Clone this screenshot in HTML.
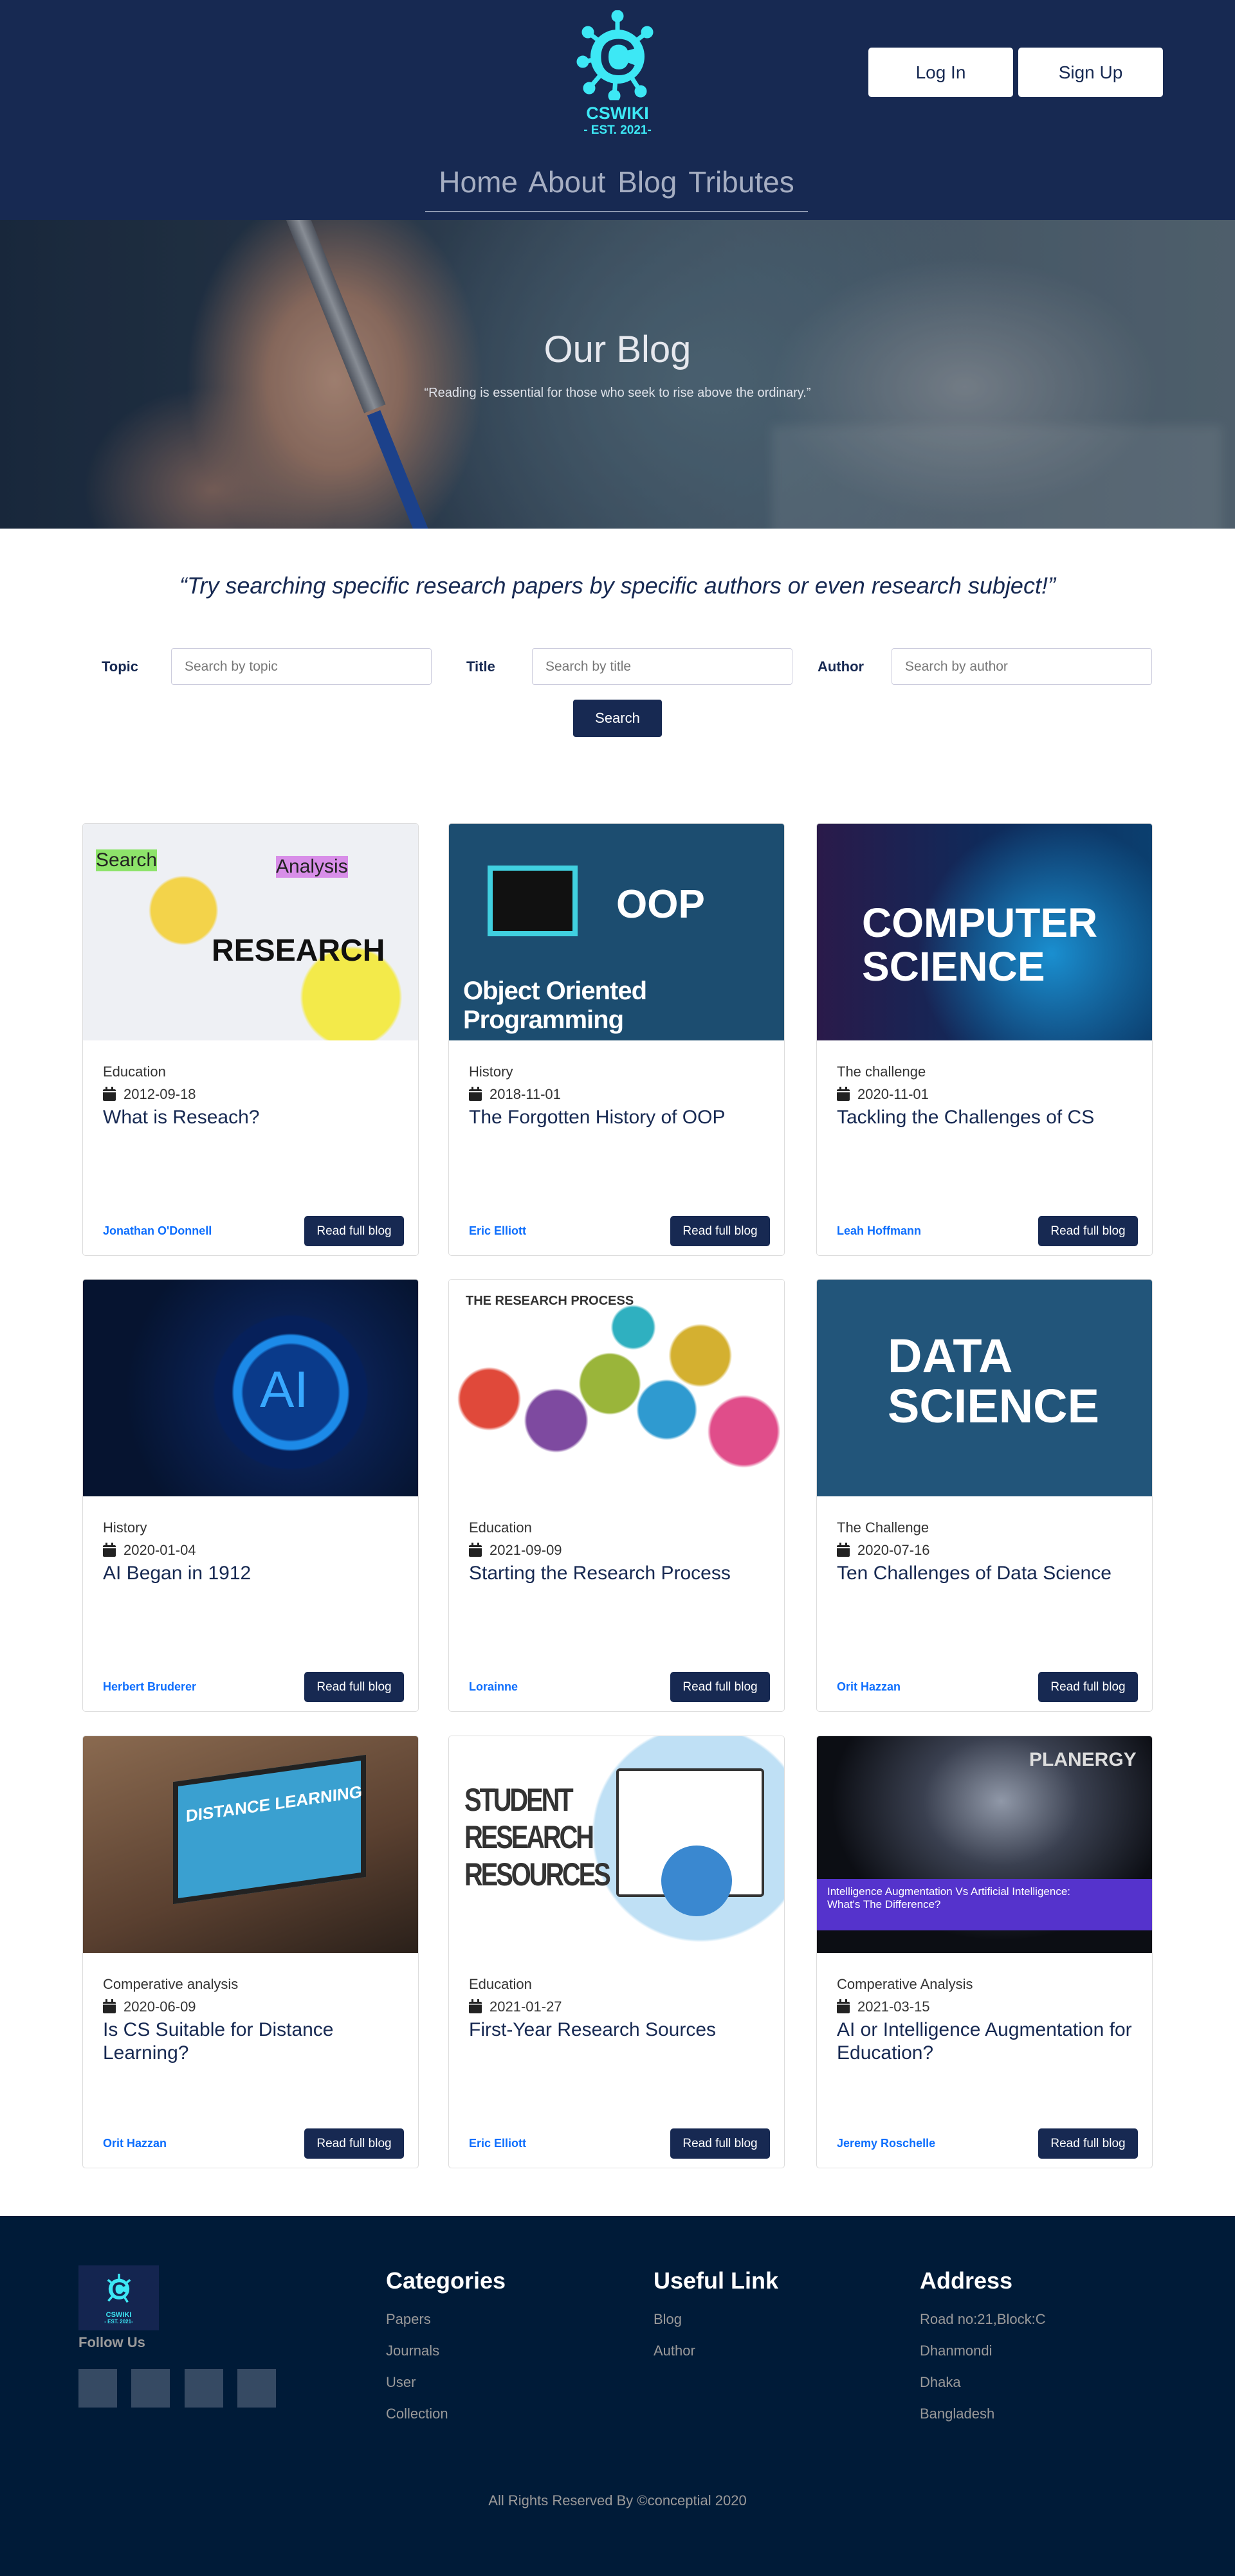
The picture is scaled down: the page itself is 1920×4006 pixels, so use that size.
<!DOCTYPE html>
<html><head><meta charset="utf-8">
<style>
*{box-sizing:border-box;margin:0;padding:0}
body{width:1920px;height:4006px;font-family:"Liberation Sans",sans-serif;background:#fff;position:relative;overflow:hidden}
.hdr{position:absolute;left:0;top:0;width:1920px;height:342px;background:#172952}
.logo{position:absolute;left:870px;top:10px;width:180px;height:210px;text-align:center}
.btn{position:absolute;top:74px;height:77px;width:225px;background:#fff;border-radius:5px;color:#172952;font-size:28px;text-align:center;line-height:77px}
.nav{position:absolute;left:661px;top:256px;width:595px;height:74px;border-bottom:2px solid #8c97b0;text-align:center;font-size:46px;color:#a6aec2;word-spacing:6px}
.hero{position:absolute;left:0;top:342px;width:1920px;height:480px;overflow:hidden;
background:
radial-gradient(ellipse 230px 300px at 520px 250px,#c0967e 0%,#a27a66 45%,rgba(80,70,75,0) 100%),
radial-gradient(ellipse 200px 160px at 330px 420px,#8a6a5e 0%,rgba(80,70,75,0) 100%),
radial-gradient(ellipse 300px 200px at 1500px 260px,#8a939a 0%,rgba(100,110,120,0) 100%),
radial-gradient(ellipse 500px 400px at 1100px 250px,#56707e 0%,rgba(60,80,95,0) 100%),
linear-gradient(90deg,#1a2a3e 0%,#263748 25%,#4b5e6e 60%,#5d6f7a 100%)}
.hero .ov{position:absolute;inset:0;background:rgba(20,30,50,.2)}
.hero h1{position:absolute;top:168px;width:100%;text-align:center;color:#e6e8ee;font-size:58px;font-weight:normal}
.hero p{position:absolute;top:258px;width:100%;text-align:center;color:#e0e3ea;font-size:20px}
.quote{position:absolute;top:890px;width:100%;text-align:center;color:#172952;font-size:36px;font-style:italic}
.lbl{position:absolute;top:1024px;font-size:22px;font-weight:bold;color:#172952}
.inp{position:absolute;top:1008px;height:57px;width:405px;border:1px solid #ccd;border-radius:4px;font-size:21px;color:#777;padding-left:20px;line-height:55px}
.sbtn{position:absolute;left:891px;top:1088px;width:138px;height:58px;background:#172952;border-radius:4px;color:#fff;font-size:22px;text-align:center;line-height:58px}
.card{position:absolute;width:523px;height:673px;border:1px solid #ddd;border-radius:5px;overflow:hidden;display:flex;flex-direction:column}
.img{height:337px;position:relative;overflow:hidden;flex:none}
.body{flex:1;padding:32px 22px 14px 31px;display:flex;flex-direction:column}
.cat{font-size:22px;color:#333;line-height:34px}
.date{font-size:22px;color:#333;line-height:36px}
.date svg{vertical-align:-3px;margin-right:12px}
.ttl{font-size:30px;font-weight:500;color:#172952;line-height:36px}
.ft{margin-top:auto;display:flex;justify-content:space-between;align-items:center}
.au{color:#0d6efd;font-weight:bold;font-size:18px}
.rb{background:#172952;color:#fff;font-size:19px;border-radius:5px;width:155px;height:47px;line-height:47px;text-align:center}
.foot{position:absolute;left:0;top:3446px;width:1920px;height:560px;background:#001b38}
.fh{position:absolute;top:80px;color:#fff;font-size:36px;font-weight:bold}
.fl{position:absolute;color:#9a9a9a;font-size:22px;line-height:49px}
.sq{position:absolute;top:238px;width:60px;height:60px;background:#364a63}
</style></head><body>
<div class="hdr">
 <div class="logo">
  <svg width="130" height="140" viewBox="0 0 130 140" style="margin-top:6px">
   <g stroke="#3de8f5" stroke-width="7" stroke-linecap="round" fill="#3de8f5">
    <line x1="65" y1="70" x2="65" y2="10"/><line x1="65" y1="70" x2="20" y2="35"/><line x1="65" y1="70" x2="110" y2="35"/>
    <line x1="65" y1="70" x2="12" y2="80"/><line x1="65" y1="70" x2="22" y2="120"/><line x1="65" y1="70" x2="60" y2="132"/>
    <line x1="65" y1="70" x2="100" y2="125"/>
    <circle cx="65" cy="9" r="6"/><circle cx="19" cy="34" r="6"/><circle cx="111" cy="34" r="6"/><circle cx="11" cy="80" r="6"/><circle cx="21" cy="121" r="6"/><circle cx="60" cy="133" r="6"/><circle cx="101" cy="126" r="6"/>
   </g>
   <circle cx="65" cy="72" r="42" fill="#3de8f5"/>
   <text x="65" y="100" text-anchor="middle" font-family="Liberation Sans" font-weight="bold" font-size="80" fill="#172952">C</text>
  </svg>
  <div style="color:#3de8f5;font-weight:bold;font-size:27px;margin-top:0">CSWIKI</div>
  <div style="color:#3de8f5;font-weight:bold;font-size:19px">- EST. 2021-</div>
 </div>
 <div class="btn" style="left:1350px">Log In</div>
 <div class="btn" style="left:1583px">Sign Up</div>
 <div class="nav">Home About Blog Tributes</div>
</div>
<div class="hero">
 <div style="position:absolute;left:430px;top:-40px;width:36px;height:360px;background:linear-gradient(90deg,#5c6068,#a5a9ae,#5c6068);transform:rotate(-22deg);transform-origin:top"></div>
 <div style="position:absolute;left:570px;top:300px;width:22px;height:240px;background:#1f4aa0;transform:rotate(-22deg);transform-origin:top"></div>
 <div style="position:absolute;left:1200px;top:320px;width:700px;height:200px;background:rgba(200,205,210,.15);filter:blur(8px)"></div>
 <div class="ov"></div>
 <h1>Our Blog</h1><p>“Reading is essential for those who seek to rise above the ordinary.”</p></div>
<div class="quote">“Try searching specific research papers by specific authors or even research subject!”</div>
<div class="lbl" style="left:158px">Topic</div><div class="inp" style="left:266px">Search by topic</div>
<div class="lbl" style="left:725px">Title</div><div class="inp" style="left:827px">Search by title</div>
<div class="lbl" style="left:1271px">Author</div><div class="inp" style="left:1386px">Search by author</div>
<div class="sbtn">Search</div>

<div class="card" style="left:128px;top:1280px"><div class="img" style="background:radial-gradient(circle at 30% 40%,#f3d34a 0 12%,transparent 13%),radial-gradient(circle at 80% 80%,#f3ea4a 0 15%,transparent 16%),#eef0f4"><div style="position:absolute;left:200px;top:170px;font-size:48px;font-weight:bold;color:#111">RESEARCH</div><div style="position:absolute;left:20px;top:40px;font-size:30px;color:#222;background:#8de36a">Search</div><div style="position:absolute;left:300px;top:50px;font-size:30px;color:#222;background:#d88ee8">Analysis</div></div>
<div class="body"><div class="cat">Education</div><div class="date"><svg width="20" height="22" viewBox="0 0 20 22"><rect x="0" y="4" width="20" height="18" rx="2" fill="#222"/><rect x="4" y="0" width="3" height="6" fill="#222"/><rect x="13" y="0" width="3" height="6" fill="#222"/><rect x="0" y="7" width="20" height="1.5" fill="#fff"/></svg>2012-09-18</div><div class="ttl">What is Reseach?</div>
<div class="ft"><span class="au">Jonathan O'Donnell</span><span class="rb">Read full blog</span></div></div></div>

<div class="card" style="left:697px;top:1280px"><div class="img" style="background:#1c4d70"><div style="position:absolute;left:60px;top:65px;width:140px;height:110px;border:8px solid #40d0e0;background:#111"></div><div style="position:absolute;left:260px;top:90px;font-size:62px;color:#fff;font-weight:bold">OOP</div><div style="position:absolute;left:22px;top:238px;font-size:40px;color:#fff;font-weight:bold;letter-spacing:-1px">Object Oriented Programming</div></div>
<div class="body"><div class="cat">History</div><div class="date"><svg width="20" height="22" viewBox="0 0 20 22"><rect x="0" y="4" width="20" height="18" rx="2" fill="#222"/><rect x="4" y="0" width="3" height="6" fill="#222"/><rect x="13" y="0" width="3" height="6" fill="#222"/><rect x="0" y="7" width="20" height="1.5" fill="#fff"/></svg>2018-11-01</div><div class="ttl">The Forgotten History of OOP</div>
<div class="ft"><span class="au">Eric Elliott</span><span class="rb">Read full blog</span></div></div></div>

<div class="card" style="left:1269px;top:1280px"><div class="img" style="background:radial-gradient(circle at 70% 60%,#1a8fd0 0,transparent 50%),linear-gradient(90deg,#2a1a4a,#0f2a5a 50%,#0b3f6f)"><div style="position:absolute;left:70px;top:120px;font-size:64px;color:#fff;font-weight:bold;line-height:68px">COMPUTER<br>SCIENCE</div></div>
<div class="body"><div class="cat">The challenge</div><div class="date"><svg width="20" height="22" viewBox="0 0 20 22"><rect x="0" y="4" width="20" height="18" rx="2" fill="#222"/><rect x="4" y="0" width="3" height="6" fill="#222"/><rect x="13" y="0" width="3" height="6" fill="#222"/><rect x="0" y="7" width="20" height="1.5" fill="#fff"/></svg>2020-11-01</div><div class="ttl">Tackling the Challenges of CS</div>
<div class="ft"><span class="au">Leah Hoffmann</span><span class="rb">Read full blog</span></div></div></div>

<div class="card" style="left:128px;top:1989px"><div class="img" style="background:radial-gradient(circle at 62% 52%,#0a3a8a 0 20%,#1c8ae8 21% 24%,#06205a 25% 32%,#0a2050 33%,#061430 70%)"><div style="position:absolute;left:275px;top:125px;font-size:80px;color:#38a8ff">AI</div></div>
<div class="body"><div class="cat">History</div><div class="date"><svg width="20" height="22" viewBox="0 0 20 22"><rect x="0" y="4" width="20" height="18" rx="2" fill="#222"/><rect x="4" y="0" width="3" height="6" fill="#222"/><rect x="13" y="0" width="3" height="6" fill="#222"/><rect x="0" y="7" width="20" height="1.5" fill="#fff"/></svg>2020-01-04</div><div class="ttl">AI Began in 1912</div>
<div class="ft"><span class="au">Herbert Bruderer</span><span class="rb">Read full blog</span></div></div></div>

<div class="card" style="left:697px;top:1989px"><div class="img" style="background:radial-gradient(circle at 12% 55%,#e0493a 0 9%,transparent 10%),radial-gradient(circle at 32% 65%,#7e4aa0 0 11%,transparent 12%),radial-gradient(circle at 48% 48%,#9ab53a 0 14%,transparent 15%),radial-gradient(circle at 65% 60%,#2f9ad0 0 11%,transparent 12%),radial-gradient(circle at 75% 35%,#d4b030 0 10%,transparent 11%),radial-gradient(circle at 88% 70%,#e04d8a 0 10%,transparent 11%),radial-gradient(circle at 55% 22%,#2fb0c0 0 8%,transparent 9%),#fff"><div style="position:absolute;left:26px;top:22px;font-size:20px;font-weight:bold;color:#333">THE RESEARCH PROCESS</div></div>
<div class="body"><div class="cat">Education</div><div class="date"><svg width="20" height="22" viewBox="0 0 20 22"><rect x="0" y="4" width="20" height="18" rx="2" fill="#222"/><rect x="4" y="0" width="3" height="6" fill="#222"/><rect x="13" y="0" width="3" height="6" fill="#222"/><rect x="0" y="7" width="20" height="1.5" fill="#fff"/></svg>2021-09-09</div><div class="ttl">Starting the Research Process</div>
<div class="ft"><span class="au">Lorainne</span><span class="rb">Read full blog</span></div></div></div>

<div class="card" style="left:1269px;top:1989px"><div class="img" style="background:#22557a"><div style="position:absolute;left:110px;top:80px;font-size:74px;color:#fff;font-weight:bold;line-height:78px">DATA<br>SCIENCE</div></div>
<div class="body"><div class="cat">The Challenge</div><div class="date"><svg width="20" height="22" viewBox="0 0 20 22"><rect x="0" y="4" width="20" height="18" rx="2" fill="#222"/><rect x="4" y="0" width="3" height="6" fill="#222"/><rect x="13" y="0" width="3" height="6" fill="#222"/><rect x="0" y="7" width="20" height="1.5" fill="#fff"/></svg>2020-07-16</div><div class="ttl">Ten Challenges of Data Science</div>
<div class="ft"><span class="au">Orit Hazzan</span><span class="rb">Read full blog</span></div></div></div>

<div class="card" style="left:128px;top:2699px"><div class="img" style="background:linear-gradient(160deg,#8a6a50,#5a4030 60%,#2a201a)"><div style="position:absolute;left:140px;top:50px;width:300px;height:190px;background:#3aa0d0;transform:skewY(-8deg);border:8px solid #222"></div><div style="position:absolute;left:160px;top:90px;font-size:26px;color:#fff;font-weight:bold;transform:skewY(-8deg)">DISTANCE LEARNING</div></div>
<div class="body"><div class="cat">Comperative analysis</div><div class="date"><svg width="20" height="22" viewBox="0 0 20 22"><rect x="0" y="4" width="20" height="18" rx="2" fill="#222"/><rect x="4" y="0" width="3" height="6" fill="#222"/><rect x="13" y="0" width="3" height="6" fill="#222"/><rect x="0" y="7" width="20" height="1.5" fill="#fff"/></svg>2020-06-09</div><div class="ttl">Is CS Suitable for Distance Learning?</div>
<div class="ft"><span class="au">Orit Hazzan</span><span class="rb">Read full blog</span></div></div></div>

<div class="card" style="left:697px;top:2699px"><div class="img" style="background:radial-gradient(circle at 75% 45%,#bfe0f5 0 38%,transparent 39%),#fff"><div style="position:absolute;left:260px;top:50px;width:230px;height:200px;border:4px solid #333;background:#fff;border-radius:6px"></div><div style="position:absolute;left:330px;top:170px;width:110px;height:110px;border-radius:50%;background:#3a88d0"></div><div style="position:absolute;left:24px;top:70px;font-size:50px;color:#333;font-weight:bold;line-height:58px;letter-spacing:-4px;transform:scaleX(.8);transform-origin:left">STUDENT<br>RESEARCH<br>RESOURCES</div></div>
<div class="body"><div class="cat">Education</div><div class="date"><svg width="20" height="22" viewBox="0 0 20 22"><rect x="0" y="4" width="20" height="18" rx="2" fill="#222"/><rect x="4" y="0" width="3" height="6" fill="#222"/><rect x="13" y="0" width="3" height="6" fill="#222"/><rect x="0" y="7" width="20" height="1.5" fill="#fff"/></svg>2021-01-27</div><div class="ttl">First-Year Research Sources</div>
<div class="ft"><span class="au">Eric Elliott</span><span class="rb">Read full blog</span></div></div></div>

<div class="card" style="left:1269px;top:2699px"><div class="img" style="background:radial-gradient(ellipse at 55% 30%,#9098a8 0,#3a4050 30%,#0c0e14 65%)"><div style="position:absolute;left:330px;top:20px;font-size:30px;color:#ddd;font-weight:bold">PLANERGY</div><div style="position:absolute;left:0;top:222px;width:523px;height:80px;background:#5533cc;color:#fff;font-size:17px;padding:10px 16px">Intelligence Augmentation Vs Artificial Intelligence:<br>What's The Difference?</div></div>
<div class="body"><div class="cat">Comperative Analysis</div><div class="date"><svg width="20" height="22" viewBox="0 0 20 22"><rect x="0" y="4" width="20" height="18" rx="2" fill="#222"/><rect x="4" y="0" width="3" height="6" fill="#222"/><rect x="13" y="0" width="3" height="6" fill="#222"/><rect x="0" y="7" width="20" height="1.5" fill="#fff"/></svg>2021-03-15</div><div class="ttl">AI or Intelligence Augmentation for Education?</div>
<div class="ft"><span class="au">Jeremy Roschelle</span><span class="rb">Read full blog</span></div></div></div>

<div class="foot">
 <div style="position:absolute;left:122px;top:77px;width:125px;height:101px;background:#142550;text-align:center;color:#3de8f5;font-weight:bold">
  <svg width="50" height="60" viewBox="0 0 130 140" style="margin-top:6px"><g stroke="#3de8f5" stroke-width="9" fill="none"><line x1="65" y1="70" x2="65" y2="10"/><line x1="65" y1="70" x2="20" y2="35"/><line x1="65" y1="70" x2="110" y2="35"/><line x1="65" y1="70" x2="22" y2="120"/><line x1="65" y1="70" x2="100" y2="125"/></g><circle cx="65" cy="72" r="42" fill="#3de8f5"/><text x="65" y="100" text-anchor="middle" font-family="Liberation Sans" font-weight="bold" font-size="80" fill="#142550">C</text></svg>
  <div style="font-size:11px">CSWIKI</div><div style="font-size:8px">- EST. 2021-</div></div>
 <div style="position:absolute;left:122px;top:184px;color:#9a9a9a;font-size:22px;font-weight:bold">Follow Us</div>
 <div class="sq" style="left:122px"></div><div class="sq" style="left:204px"></div><div class="sq" style="left:287px"></div><div class="sq" style="left:369px"></div>
 <div class="fh" style="left:600px">Categories</div><div class="fh" style="left:1016px">Useful Link</div><div class="fh" style="left:1430px">Address</div>
 <div class="fl" style="left:600px;top:136px">Papers<br>Journals<br>User<br>Collection</div>
 <div class="fl" style="left:1016px;top:136px">Blog<br>Author</div>
 <div class="fl" style="left:1430px;top:136px">Road no:21,Block:C<br>Dhanmondi<br>Dhaka<br>Bangladesh</div>
 <div style="position:absolute;top:430px;width:100%;text-align:center;color:#9a9a9a;font-size:22px">All Rights Reserved By ©conceptial 2020</div>
</div>
</body></html>
